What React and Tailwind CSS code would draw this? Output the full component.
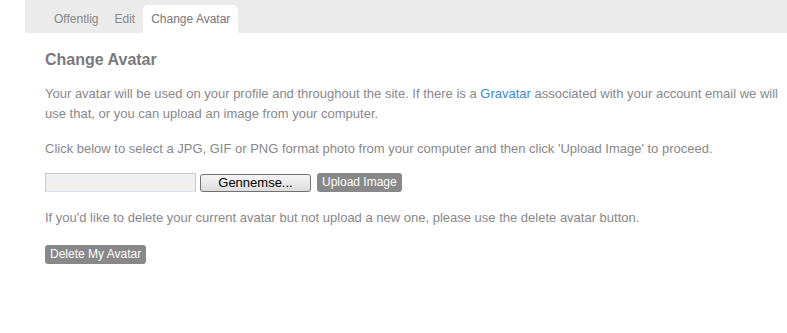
import React from "react";

const tabs = ["Offentlig", "Edit", "Change Avatar"];

const App = () => {
  return (
    <div className="min-h-[333px] w-[787px] bg-white font-['Liberation_Sans',Arial,sans-serif] text-[13px] text-[#888]">
      {/* Sub navigation */}
      <div className="ml-[25px] flex h-[33px] items-end bg-[#ebebeb] pl-[21px]">
        {tabs.map((tab) => (
          <div
            key={tab}
            className={`flex h-[28px] items-center rounded-t-[5px] px-[8px] text-[12px] ${
              tab === "Change Avatar" ? "bg-white text-[#777]" : "text-[#888]"
            }`}
          >
            {tab}
          </div>
        ))}
      </div>

      {/* Content */}
      <div className="ml-[45px] w-[740px] pt-[17px]">
        <h2 className="text-[16px] font-bold leading-[20px] text-[#7a7a7a]">Change Avatar</h2>

        <p className="mt-[14px] leading-[20px]">
          Your avatar will be used on your profile and throughout the site. If there is a{" "}
          <a href="#" className="text-[#3a8dcc]">Gravatar</a> associated with your account email we will use
          that, or you can upload an image from your computer.
        </p>

        <p className="mt-[15px] leading-[20px]">
          Click below to select a JPG, GIF or PNG format photo from your computer and then click 'Upload Image' to
          proceed.
        </p>

        {/* File picker */}
        <div className="mt-[14px] flex items-center">
          <div className="h-[19px] w-[151px] border border-[#c9c9c9] border-b-[#dce3ea] bg-[#f0f0f0]" />
          <button className="ml-[4px] h-[18px] w-[111px] rounded-[3px] border border-[#707070] bg-gradient-to-b from-[#f6f6f6] to-[#dddddd] text-[13px] leading-[14px] text-black">
            Gennemse...
          </button>
          <button className="ml-[6px] h-[19px] rounded-[3px] bg-[#888] px-[5px] text-[12px] leading-[19px] text-white">
            Upload Image
          </button>
        </div>

        <p className="mt-[16px] leading-[20px]">
          If you'd like to delete your current avatar but not upload a new one, please use the delete avatar button.
        </p>

        <button className="mt-[17px] h-[19px] rounded-[3px] bg-[#888] px-[5px] text-[12px] leading-[19px] text-white">
          Delete My Avatar
        </button>
      </div>
    </div>
  );
};

export default App;
